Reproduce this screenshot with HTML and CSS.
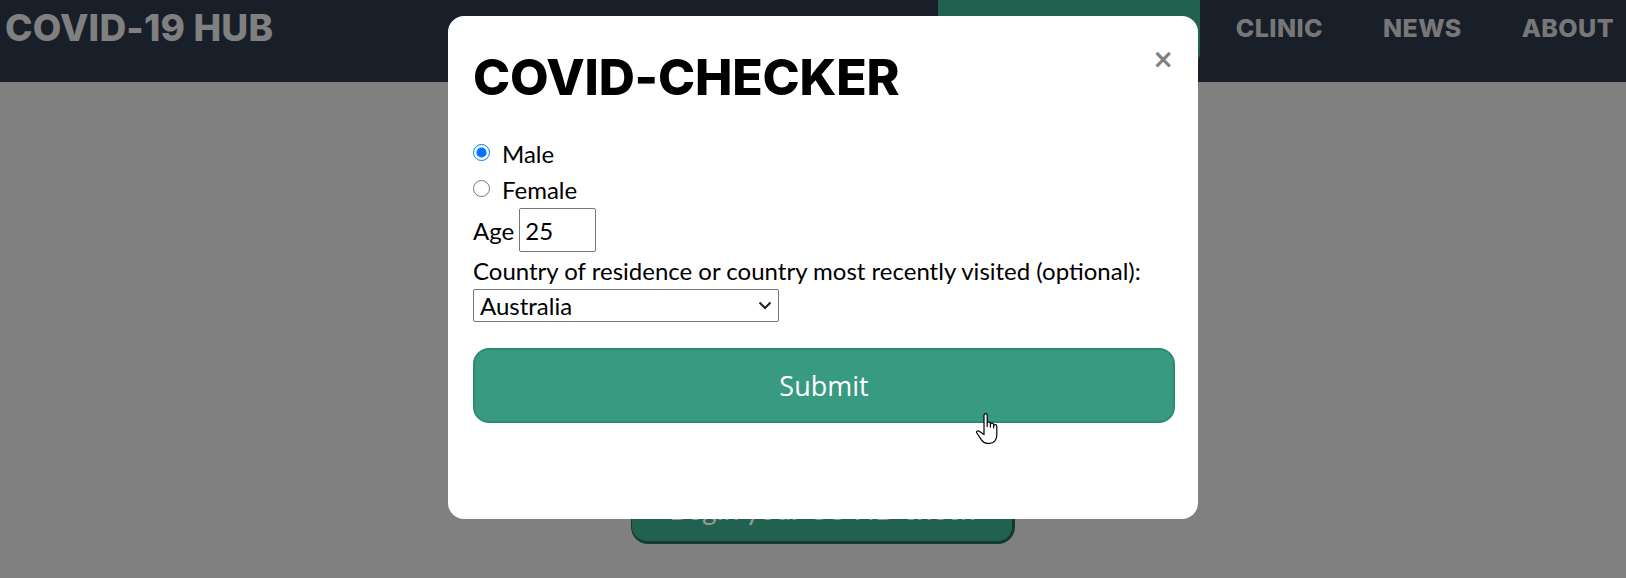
FILE: index.html
```html
<!DOCTYPE html>
<html lang="en">
<head>
<meta charset="utf-8">
<title>COVID-19 HUB</title>
<link rel="stylesheet" href="styles.css">
</head>
<body>
<header class="nav">
  <h1 class="brand">COVID-19 HUB</h1>
  <nav class="nav-links">
    <a class="nav-item nav-item-active" href="#">COVID-CHECKER</a>
    <a class="nav-item" href="#">CLINIC</a>
    <a class="nav-item" href="#">NEWS</a>
    <a class="nav-item" href="#">ABOUT</a>
  </nav>
</header>
<main class="hero">
  <button class="begin-btn" type="button">Begin your COVID check</button>
</main>

<div class="backdrop">
  <div class="modal">
    <span class="close">&times;</span>
    <h2 class="modal-title">COVID-CHECKER</h2>
    <form class="checker-form">
      <label class="radio-row"><input type="radio" name="sex" checked class="radio"> Male</label>
      <label class="radio-row"><input type="radio" name="sex" class="radio"> Female</label>
      <label class="age-row">Age <input type="text" value="25" class="age-input"></label>
      <label class="country-label">Country of residence or country most recently visited (optional):</label>
      <div class="select-wrap">
        <select class="country-select"><option>Australia</option></select>
        <svg class="chevron" width="14" height="9" viewBox="0 0 14 9"><path d="M1.5 1.5L7 7l5.5-5.5" fill="none" stroke="#202020" stroke-width="2"/></svg>
      </div>
      <button type="button" class="submit-btn">Submit</button>
    </form>
  </div>
  <svg class="cursor" width="28" height="32" viewBox="0 0 28 32">
    <path d="M9 2.2a1.6 1.6 0 0 1 3.2 0V13.5V10.6a1.6 1.6 0 0 1 3.2 0V14V11.8a1.6 1.6 0 0 1 3.2 0V14.8V13.2a1.6 1.6 0 0 1 3.2 0V22c0 4.5-2.6 8.3-7 8.3h-2.6c-2.6 0-4.2-1.2-5.8-3.4L1.8 20c-.9-1.3.7-2.8 2-1.9L9 21.6Z" fill="#fff" stroke="#000" stroke-width="1.2" stroke-linejoin="round"/>
  </svg>
</div>
</body>
</html>
```
FILE: styles.css
```css
* { box-sizing: border-box; }
html, body { margin: 0; height: 100%; }
body {
  background: #d5d5d5;
  font-family: Lato, "Open Sans", sans-serif;
  overflow: hidden;
}

.nav {
  height: 82px;
  background: #283444;
  display: flex;
  align-items: flex-start;
  padding-right: 12px;
}
.brand {
  margin: 0;
  padding: 6px 0 0 5px;
  font-family: Inter, "DejaVu Sans", sans-serif;
  font-weight: 800;
  font-size: 37px;
  line-height: 44px;
  color: #d5d5d5;
  letter-spacing: 0.2px;
}
.nav-links {
  margin-left: auto;
  display: flex;
  align-items: flex-start;
  gap: 60px;
}
.nav-item {
  font-family: Inter, "DejaVu Sans", sans-serif;
  font-weight: 800;
  font-size: 25px;
  line-height: 30px;
  padding-top: 13px;
  color: #c6c6c6;
  text-decoration: none;
  letter-spacing: 0.4px;
}
.nav-item-active {
  width: 262px;
  height: 67px;
  background: #37a285;
  color: #ffffff;
  text-align: center;
  border-radius: 0 0 14px 14px;
  margin-right: -24px;
}

.hero {
  display: flex;
  justify-content: center;
  padding: 398px 0 0 20px;
}
.begin-btn {
  width: 384px;
  height: 64px;
  background: #37a285;
  border: 1px solid #20614e;
  border-width: 1px 3px 3px 1px;
  border-radius: 17px;
  color: #ffffff;
  font-family: Lato, sans-serif;
  font-size: 28px;
  padding: 0 0 4px;
}

.backdrop {
  position: fixed;
  inset: 0;
  background: rgba(0, 0, 0, 0.4);
  display: flex;
  justify-content: center;
  align-items: flex-start;
  padding: 16px 0 0 20px;
}
.modal {
  position: relative;
  width: 750px;
  height: 503px;
  background: #ffffff;
  border-radius: 16px;
  padding: 25px;
}
.close {
  position: absolute;
  top: 28px;
  right: 24px;
  font-family: "DejaVu Sans", sans-serif;
  font-size: 26px;
  line-height: 30px;
  font-weight: bold;
  color: #808080;
  cursor: pointer;
}
.modal-title {
  margin: 6px 0 28px;
  font-family: Inter, "DejaVu Sans", sans-serif;
  font-weight: 800;
  font-size: 50px;
  line-height: 60px;
  color: #000000;
  letter-spacing: -0.2px;
}

.checker-form {
  display: flex;
  flex-direction: column;
  align-items: flex-start;
  font-size: 24px;
  color: #000;
}
.radio-row {
  height: 36px;
  display: flex;
  align-items: center;
  gap: 12px;
}
.radio {
  width: 17px;
  height: 17px;
  margin: 0 0 2px 0;
}
.age-row {
  display: flex;
  align-items: center;
  gap: 5px;
  height: 44px;
  margin-top: 1px;
}
.age-input {
  width: 77px;
  height: 44px;
  border: 1px solid #767676;
  border-radius: 2px;
  font-family: Lato, sans-serif;
  font-size: 24px;
  padding: 0 5px;
}
.country-label {
  line-height: 32px;
  margin-top: 3px;
}
.select-wrap {
  position: relative;
  margin-top: 2px;
  width: 306px;
  height: 33px;
}
.country-select {
  appearance: none;
  -webkit-appearance: none;
  width: 100%;
  height: 100%;
  font-family: Lato, sans-serif;
  font-size: 24px;
  border: 1px solid #767676;
  border-radius: 2px;
  background: #fff;
  color: #000;
  padding: 0 6px;
}
.chevron {
  position: absolute;
  right: 7px;
  top: 12px;
  pointer-events: none;
}
.submit-btn {
  margin-top: 26px;
  width: 702px;
  height: 75px;
  background: #389a81;
  border: 2px solid #2f8a72;
  border-radius: 16px;
  color: #ffffff;
  font-family: "Open Sans", sans-serif;
  font-size: 27px;
  padding: 0;
}

.cursor {
  position: absolute;
  left: 975px;
  top: 413px;
}
```
